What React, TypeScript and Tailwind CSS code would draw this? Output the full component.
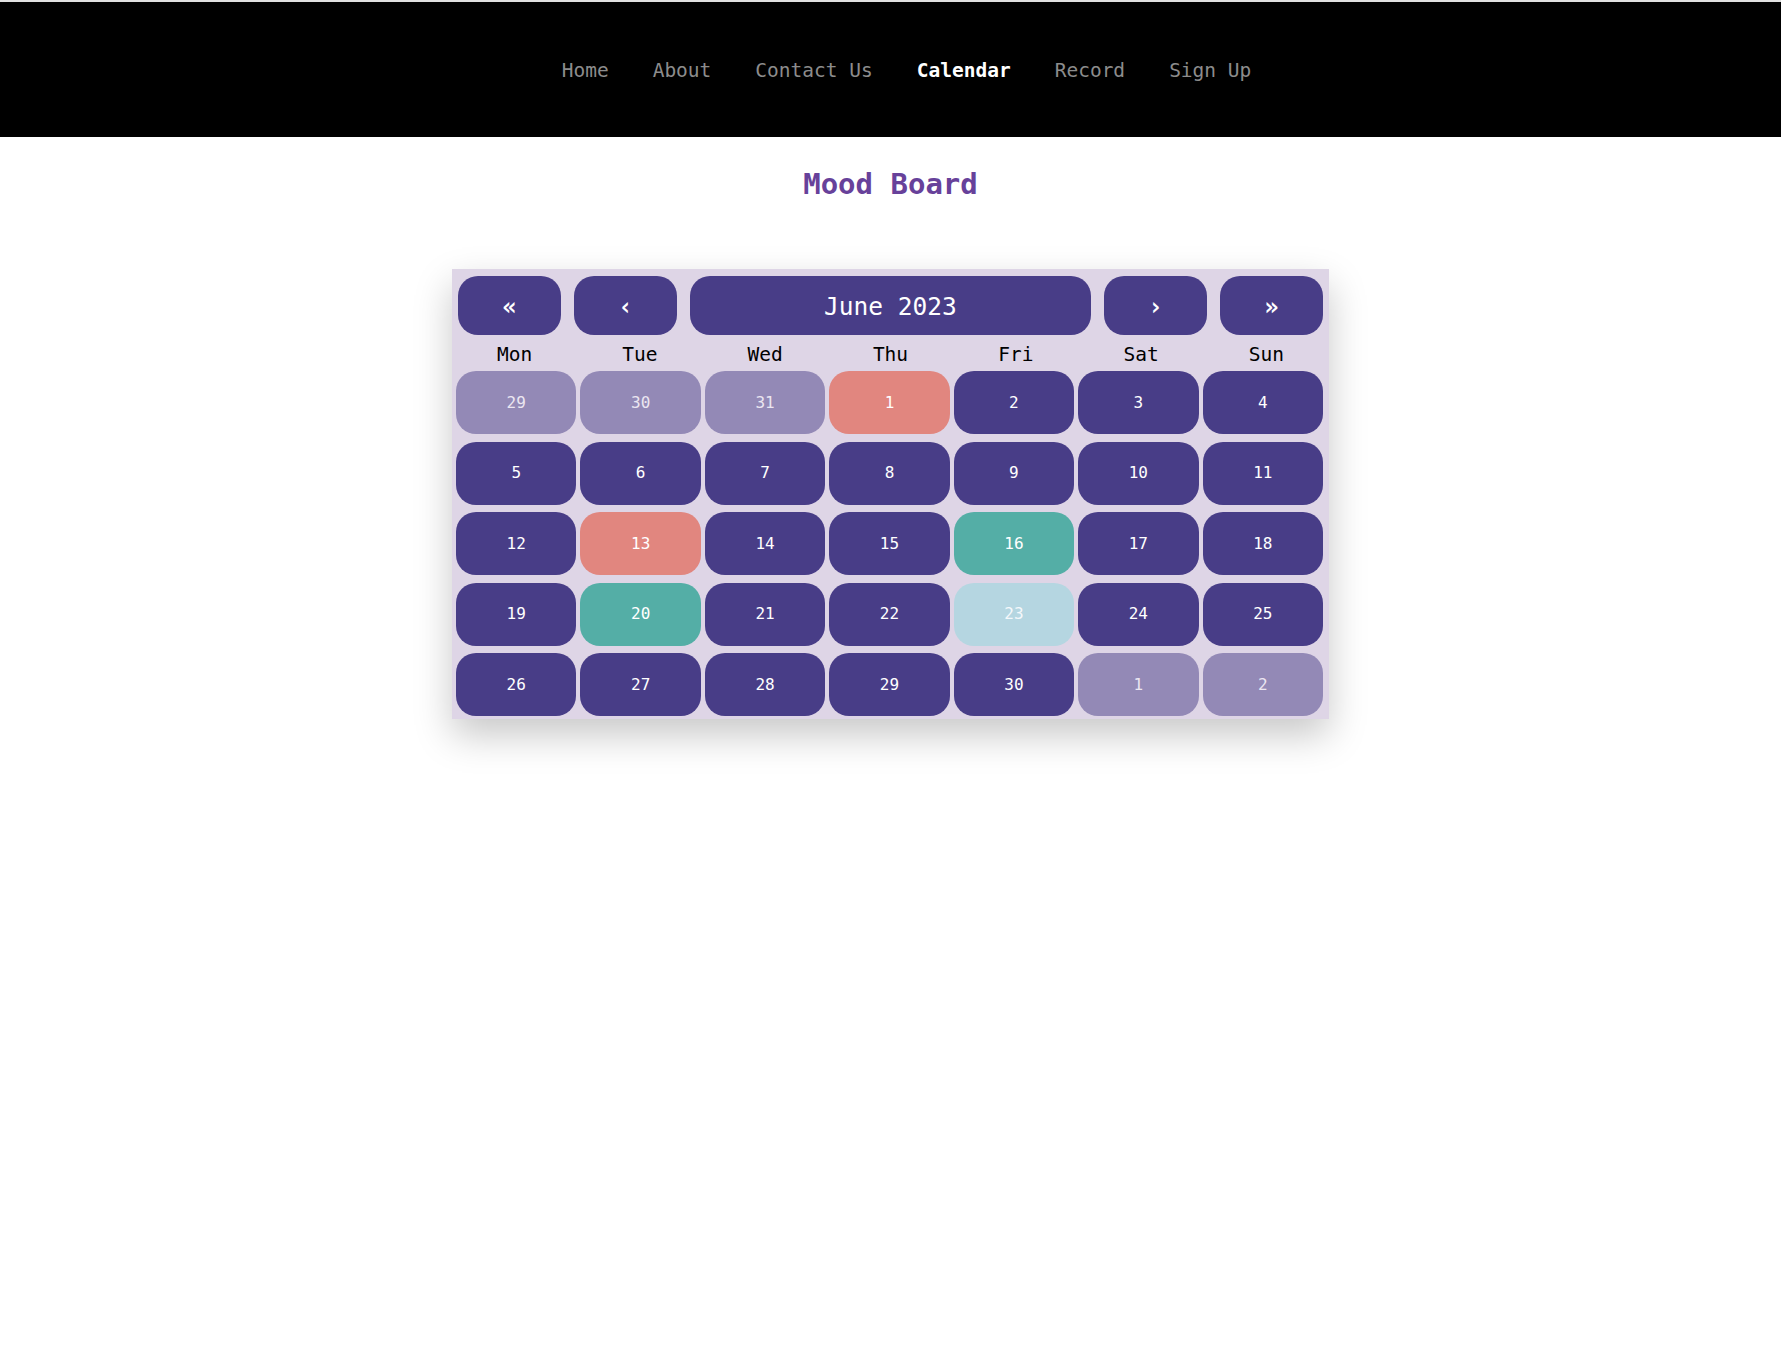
const links = ["Home", "About", "Contact Us", "Calendar", "Record", "Sign Up"];

const weekdays = ["Mon", "Tue", "Wed", "Thu", "Fri", "Sat", "Sun"];

type Day = { n: number; tone?: "muted" | "bad" | "good" | "calm" };

// June 2023, week starting on Monday
const days: Day[] = [
  { n: 29, tone: "muted" },
  { n: 30, tone: "muted" },
  { n: 31, tone: "muted" },
  { n: 1, tone: "bad" },
  ...Array.from({ length: 29 }, (_, i) => ({ n: i + 2 }) as Day),
  { n: 1, tone: "muted" },
  { n: 2, tone: "muted" },
];

const moods: Record<number, Day["tone"]> = { 13: "bad", 16: "good", 20: "good", 23: "calm" };

const toneClass = {
  muted: "bg-[#9389b6] text-[#ebe6f1]",
  bad: "bg-[#e1867f] text-white",
  good: "bg-[#54aea6] text-white",
  calm: "bg-[#b5d6e1] text-[#f4f8fb]",
  base: "bg-[#483d87] text-white",
};

function NavButton({ label }: { label: string }) {
  return (
    <button className="flex h-[59px] w-[103px] shrink-0 items-center justify-center rounded-[20px] bg-[#483d87] pt-[2px] text-[24px] font-bold text-white">
      {label}
    </button>
  );
}

export default function App() {
  return (
    <div className="min-h-screen bg-white font-['DejaVu_Sans_Mono',monospace]">
      <div className="h-[2px] bg-[#e1e1e1]" />
      <nav className="flex h-[135px] items-center justify-center gap-[44px] bg-black pt-[2px] pl-[32px]">
        {links.map((link) => (
          <a
            key={link}
            href="#"
            className={
              link === "Calendar"
                ? "text-[19.5px] font-bold text-white"
                : "text-[19.5px] text-[#8c8c8c]"
            }
          >
            {link}
          </a>
        ))}
      </nav>

      <main className="flex flex-col items-center">
        <h1 className="mt-[30px] text-[29px] font-bold leading-[35px] text-[#67419a]">
          Mood Board
        </h1>

        <section className="mt-[67px] w-[877px] bg-[#ded5e6] pt-[7px] pb-[3px] shadow-[0_16px_36px_rgba(0,0,0,0.22)]">
          <div className="flex gap-[13px] px-[6px]">
            <NavButton label="«" />
            <NavButton label="‹" />
            <div className="flex h-[59px] flex-1 items-center justify-center rounded-[20px] bg-[#483d87] pt-[3px] text-[24.5px] text-white">
              June 2023
            </div>
            <NavButton label="›" />
            <NavButton label="»" />
          </div>

          <div className="grid h-[36px] grid-cols-7">
            {weekdays.map((d) => (
              <div
                key={d}
                className="flex items-center justify-center pt-[4px] text-[19.5px] text-black"
              >
                {d}
              </div>
            ))}
          </div>

          <div className="grid grid-cols-7 gap-x-[4px] gap-y-[7.5px] pr-[6px] pl-[4px]">
            {days.map((day, i) => {
              const tone = day.tone ?? moods[day.n] ?? "base";
              return (
                <div
                  key={i}
                  className={`flex h-[63px] items-center justify-center rounded-[20px] text-[16px] ${toneClass[tone]}`}
                >
                  {day.n}
                </div>
              );
            })}
          </div>
        </section>
      </main>
    </div>
  );
}
